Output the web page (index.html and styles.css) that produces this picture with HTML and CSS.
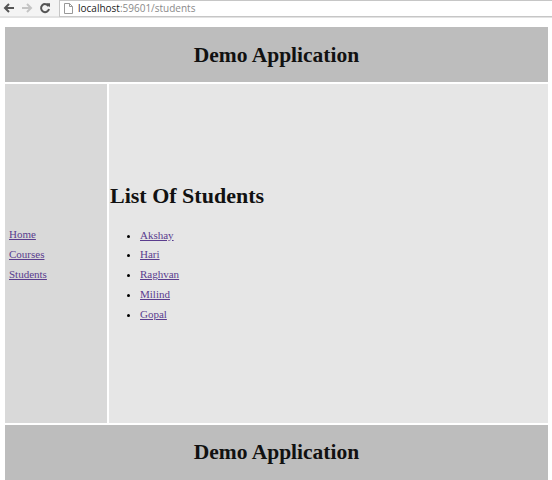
FILE: index.html
```html
<!DOCTYPE html>
<html lang="en">

<head>
  <meta charset="UTF-8">
  <meta name="viewport" content="width=device-width, initial-scale=1.0">
  <title>Students</title>
  <link rel="stylesheet" href="styles.css">
</head>

<body>
  <div class="toolbar">
    <svg class="tb-icon" width="12" height="12" viewBox="0 0 12 12">
      <path d="M11 6H2.5M6 2L2 6l4 4" fill="none" stroke="#555" stroke-width="2"/>
    </svg>
    <svg class="tb-icon" width="12" height="12" viewBox="0 0 12 12">
      <path d="M1 6h8.5M6 2l4 4-4 4" fill="none" stroke="#c4c4c4" stroke-width="2"/>
    </svg>
    <svg class="tb-icon" width="12" height="12" viewBox="0 0 12 12">
      <path d="M9.6 4.2A4 4 0 1 0 10 7" fill="none" stroke="#555" stroke-width="2"/>
      <path d="M7 1.2h4v4z" fill="#555"/>
    </svg>
    <div class="omnibox">
      <svg width="9" height="11" viewBox="0 0 9 11">
        <path d="M.5.5h5l3 3v7H.5z M5.5.5v3h3" fill="#fff" stroke="#999"/>
      </svg>
      <span class="host">localhost</span><span class="path">:59601/students</span>
    </div>
  </div>

  <div class="layout">
    <header class="banner">
      <h1>Demo Application</h1>
    </header>
    <nav class="sidebar">
      <a href="#">Home</a>
      <a href="#">Courses</a>
      <a href="#">Students</a>
    </nav>
    <main class="content">
      <h2>List Of Students</h2>
      <ul>
        <li><a href="#">Akshay</a></li>
        <li><a href="#">Hari</a></li>
        <li><a href="#">Raghvan</a></li>
        <li><a href="#">Milind</a></li>
        <li><a href="#">Gopal</a></li>
      </ul>
    </main>
    <footer class="banner">
      <h1>Demo Application</h1>
    </footer>
  </div>
</body>

</html>
```

FILE: styles.css
```css
body {
  margin: 0;
  background: #fff;
  font-family: "Liberation Serif", serif;
  overflow: hidden;
}

/* browser bar */
.toolbar {
  display: flex;
  align-items: center;
  height: 16px;
  padding-left: 3px;
  background: #f4f4f4;
  border-bottom: 2px solid #e2e2e2;
}

.tb-icon {
  margin-right: 6px;
}

.omnibox {
  display: flex;
  align-items: center;
  flex: 1;
  height: 15px;
  margin-left: 2px;
  padding-left: 4px;
  background: #fff;
  border: 1px solid #c6c6c6;
  border-right: none;
  font-family: "Open Sans", sans-serif;
  font-size: 10px;
}

.omnibox svg {
  margin-right: 5px;
}

.host {
  color: #222;
}

.path {
  color: #8a8a8a;
}

/* page */
.layout {
  display: grid;
  grid-template-columns: 102px 1fr;
  grid-template-rows: 55px 339px 58px;
  gap: 2px;
  margin: 9px 4px 0 5px;
}

.banner {
  grid-column: 1 / 3;
  display: flex;
  align-items: center;
  justify-content: center;
  background: #bdbdbd;
}

footer.banner {
  align-items: flex-start;
  padding-top: 16px;
}

.banner h1 {
  margin: 0;
  font-size: 21.5px;
  line-height: 22px;
  color: #111;
}

.sidebar {
  display: flex;
  flex-direction: column;
  justify-content: center;
  padding-left: 4px;
  background: #d9d9d9;
}

.sidebar a {
  line-height: 20px;
  font-size: 11px;
}

.content {
  display: flex;
  flex-direction: column;
  justify-content: center;
  padding-left: 1px;
  background: #e6e6e6;
}

.content h2 {
  margin: 0 0 17px;
  font-size: 22px;
  line-height: 26px;
  color: #111;
}

.content ul {
  margin: 0;
  padding-left: 30px;
}

.content li {
  line-height: 19.75px;
  font-size: 11px;
}

a {
  color: #5a3d8e;
}
```
